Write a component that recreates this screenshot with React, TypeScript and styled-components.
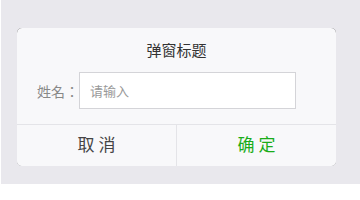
import * as React from 'react';
import styled, { createGlobalStyle } from 'styled-components';

const GlobalStyle = createGlobalStyle`
  html, body {
    margin: 0;
    padding: 0;
    background: #ffffff;
    font-family: "Noto Sans CJK SC", "Noto Sans", sans-serif;
  }
`;

export default function App() {
  return (
    <>
      <GlobalStyle />
      <Page>
        <Dialog>
          <Body>
            <Title>弹窗标题</Title>
            <Field>
              <Label>姓名：</Label>
              <Input placeholder="请输入" />
            </Field>
          </Body>
          <Footer>
            <Btn>取 消</Btn>
            <Btn primary>确 定</Btn>
          </Footer>
        </Dialog>
      </Page>
    </>
  );
}

const Page = styled.div`
  margin-left: 1px;
  background: #e9e8ed;
  padding: 28px 0 18px 16px;
`;

const Dialog = styled.div`
  width: 319px;
  background: #333;
  border-radius: 5px;
  overflow: hidden;
`;

const Body = styled.div`
  background: #f8f8fa;
  padding: 11px 0 15px;
`;

const Title = styled.div`
  text-align: center;
  font-size: 15px;
  line-height: 22px;
  color: #333;
`;

const Field = styled.div`
  display: flex;
  align-items: center;
  margin-top: 11px;
  padding-left: 20px;
`;

const Label = styled.label`
  width: 42px;
  font-family: "Noto Sans CJK TC", "Noto Sans CJK SC", sans-serif;
  font-size: 14px;
  color: #888;
`;

const Input = styled.input`
  box-sizing: border-box;
  width: 217px;
  height: 37px;
  border: 1px solid #d4d4d8;
  background: #fff;
  padding: 0 10px;
  font-family: inherit;
  font-size: 13px;
  outline: none;
  &::placeholder {
    color: #999;
  }
`;

const Footer = styled.div`
  display: flex;
  background: #f8f8fa;
  border-top: 1px solid #e4e4e8;
`;

const Btn = styled.button<{ primary?: boolean }>`
  flex: 1;
  height: 41px;
  display: flex;
  align-items: center;
  justify-content: center;
  border: none;
  background: #f8f8fa;
  font-family: inherit;
  font-size: 17px;
  line-height: 20px;
  padding: 0 0 3px;
  color: ${p => (p.primary ? '#1aad19' : '#444')};
  & + & {
    border-left: 1px solid #e4e4e8;
  }
`;
